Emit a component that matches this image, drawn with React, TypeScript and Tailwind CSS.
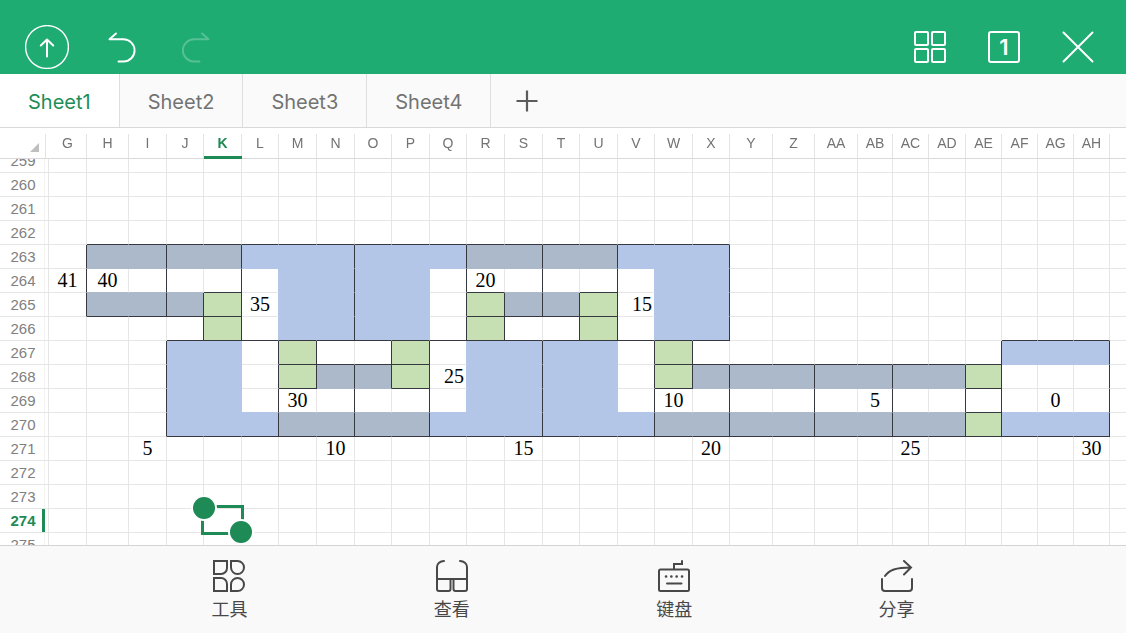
import { useLayoutEffect, useRef, useState } from 'react';
import clsx from 'clsx';

const COLUMNS = [
  { name: 'G', width: 'w-[38px]' },
  { name: 'H', width: 'w-[42px]' },
  { name: 'I', width: 'w-[38px]' },
  { name: 'J', width: 'w-[37px]' },
  { name: 'K', width: 'w-[38px]' },
  { name: 'L', width: 'w-[37px]' },
  { name: 'M', width: 'w-[38px]' },
  { name: 'N', width: 'w-[38px]' },
  { name: 'O', width: 'w-[37px]' },
  { name: 'P', width: 'w-[38px]' },
  { name: 'Q', width: 'w-[37px]' },
  { name: 'R', width: 'w-[38px]' },
  { name: 'S', width: 'w-[38px]' },
  { name: 'T', width: 'w-[37px]' },
  { name: 'U', width: 'w-[38px]' },
  { name: 'V', width: 'w-[37px]' },
  { name: 'W', width: 'w-[38px]' },
  { name: 'X', width: 'w-[37px]' },
  { name: 'Y', width: 'w-[43px]' },
  { name: 'Z', width: 'w-[42px]' },
  { name: 'AA', width: 'w-[43px]' },
  { name: 'AB', width: 'w-[35px]' },
  { name: 'AC', width: 'w-[36px]' },
  { name: 'AD', width: 'w-[37px]' },
  { name: 'AE', width: 'w-[36px]' },
  { name: 'AF', width: 'w-[36px]' },
  { name: 'AG', width: 'w-[36px]' },
  { name: 'AH', width: 'w-[36px]' },
];

const FIRST_ROW = 259;
const ROWS = Array.from({ length: 17 }, (_, i) => FIRST_ROW + i);
const SCROLL_OFFSET = 10;

type Fill = 'slate' | 'blue' | 'green';
type Line = Fill | 'grid' | 'dark';

const FILLS: Record<Fill, string[]> = {
  slate: ['H263:K263', 'H265:J265', 'R263:U263', 'S265:T265', 'N268:O268', 'M270:P270', 'X268:AD268', 'W270:AD270'],
  blue: [
    'L263:Q263', 'M264:P266', 'V263:X263', 'W264:X266', 'J267:K269', 'J270:L270',
    'R267:U269', 'Q270:V270', 'AF267:AH267', 'AF270:AH270',
  ],
  green: ['K265:K266', 'R265:R266', 'U265:U266', 'M267:M268', 'P267:P268', 'W267:W268', 'AE268:AE268', 'AE270:AE270'],
};

// ranges that carry a dark outline
const OUTLINES = [
  'H263:I265', 'J263:K265', 'K265:K265', 'K266:K266', 'L263:N266', 'O263:Q266',
  'R263:S265', 'T263:U265', 'R265:R265', 'R266:R266', 'U265:U265', 'U266:U266', 'S266:T266', 'V263:X266',
  'J267:L270', 'M267:M267', 'M268:M268', 'P267:P267', 'P268:P268', 'M268:N270', 'O268:P270',
  'Q267:S270', 'T267:V270', 'W267:W267', 'W268:W268', 'W268:X270', 'Y268:Z270', 'AA268:AB270', 'AC268:AD270',
  'AE268:AE268', 'AE269:AE269', 'AE270:AE270', 'AF267:AH270',
].map(parseRange);

const VALUES: Record<string, string> = {
  G264: '41', H264: '40', R264: '20', L265: '35', V265: '15', Q268: '25', M269: '30', W269: '10', AB269: '5', AG269: '0',
  I271: '5', N271: '10', S271: '15', X271: '20', AC271: '25', AH271: '30',
};
const RIGHT_ALIGNED = ['V265', 'Q268'];

const BG: Record<Fill, string> = {
  slate: 'bg-[#acb9cb]',
  blue: 'bg-[#b4c6e7]',
  green: 'bg-[#c6e0b3]',
};
const BORDER_RIGHT: Record<Line, string> = {
  grid: 'border-r-[#e6e6e6]',
  dark: 'border-r-[#35383f]',
  slate: 'border-r-[#acb9cb]',
  blue: 'border-r-[#b4c6e7]',
  green: 'border-r-[#c6e0b3]',
};
const BORDER_BOTTOM: Record<Line, string> = {
  grid: 'border-b-[#e6e6e6]',
  dark: 'border-b-[#35383f]',
  slate: 'border-b-[#acb9cb]',
  blue: 'border-b-[#b4c6e7]',
  green: 'border-b-[#c6e0b3]',
};

function parseRange(range: string) {
  const [from, to] = range.split(':').map((ref) => {
    const [, letters, digits] = ref.match(/([A-Z]+)(\d+)/)!;
    return { col: COLUMNS.findIndex((c) => c.name === letters), row: Number(digits) };
  });
  return { left: from.col, top: from.row, right: to.col, bottom: to.row };
}

const FILL_RANGES = (Object.keys(FILLS) as Fill[]).flatMap((fill) =>
  FILLS[fill].map((range) => ({ fill, ...parseRange(range) }))
);

function fillAt(col: number, row: number): Fill | undefined {
  return FILL_RANGES.find((r) => col >= r.left && col <= r.right && row >= r.top && row <= r.bottom)?.fill;
}

function rightLine(col: number, row: number): Line {
  const dark = OUTLINES.some((r) => row >= r.top && row <= r.bottom && (r.right === col || r.left === col + 1));
  return dark ? 'dark' : fillAt(col, row) ?? fillAt(col + 1, row) ?? 'grid';
}

function bottomLine(col: number, row: number): Line {
  const dark = OUTLINES.some((r) => col >= r.left && col <= r.right && (r.bottom === row || r.top === row + 1));
  return dark ? 'dark' : fillAt(col, row) ?? fillAt(col, row + 1) ?? 'grid';
}

function TopBar() {
  const button = 'flex size-11 items-center justify-center';
  return (
    <header className="flex shrink-0 items-end justify-between bg-[#1eac73] pt-[25px] pr-[26px] pb-[5px] pl-[25px] text-white">
      <div className="flex gap-[30px]">
        <button type="button" aria-label="Upload" className={button}>
          <svg className="size-11" viewBox="0 0 44 44" fill="none" stroke="currentColor" strokeLinecap="round" strokeLinejoin="round">
            <circle cx="22" cy="22" r="21.4" strokeWidth="1.4" />
            <path d="M22 31.5V15M15.8 20.5L22 14.5L28.2 20.5" strokeWidth="2" />
          </svg>
        </button>
        <button type="button" aria-label="Undo" className={button}>
          <svg className="size-11" viewBox="0 0 44 44" fill="none" stroke="currentColor" strokeWidth="1.9" strokeLinecap="round" strokeLinejoin="round">
            <path d="M17 8.5L10.5 14.3H24.5A11.1 11.1 0 0 1 24.5 36.5H19.5" />
          </svg>
        </button>
        <button type="button" aria-label="Redo" className={clsx(button, 'opacity-25')} disabled>
          <svg className="size-11" viewBox="0 0 44 44" fill="none" stroke="currentColor" strokeWidth="1.9" strokeLinecap="round" strokeLinejoin="round">
            <path d="M29 8.5L35.5 14.3H21A11.1 11.1 0 0 0 21 36.5H26.5" />
          </svg>
        </button>
      </div>
      <div className="flex gap-[30px]">
        <button type="button" aria-label="Grid" className={button}>
          <svg className="size-8" viewBox="0 0 32 32" fill="none" stroke="currentColor" strokeWidth="2">
            <rect x="1" y="1" width="13" height="13" rx="1" />
            <rect x="18" y="1" width="13" height="13" rx="1" />
            <rect x="1" y="18" width="13" height="13" rx="1" />
            <rect x="18" y="18" width="13" height="13" rx="1" />
          </svg>
        </button>
        <button type="button" aria-label="Open documents" className={button}>
          <span className="flex size-8 items-center justify-center rounded-[3px] border-2 border-white font-['Inter','Roboto',sans-serif] text-[22px] leading-none font-semibold">
            1
          </span>
        </button>
        <button type="button" aria-label="Close" className={button}>
          <svg className="size-8" viewBox="0 0 32 32" fill="none" stroke="currentColor" strokeWidth="2" strokeLinecap="round">
            <path d="M1.5 1.5L30.5 30.5M30.5 1.5L1.5 30.5" />
          </svg>
        </button>
      </div>
    </header>
  );
}

function SheetTabs() {
  const [active, setActive] = useState('Sheet1');
  return (
    <nav className="flex h-[54px] shrink-0 border-b border-[#d9d9d9] bg-[#fafafa] font-['Inter','Roboto',sans-serif] text-xl">
      {['Sheet1', 'Sheet2', 'Sheet3', 'Sheet4'].map((sheet) => (
        <button
          key={sheet}
          type="button"
          onClick={() => setActive(sheet)}
          className={clsx(
            'border-r border-[#dedede] px-7 pt-0.5',
            sheet === active ? 'bg-white text-[#1e8e57]' : 'text-[#737373]'
          )}
        >
          {sheet}
        </button>
      ))}
      <button type="button" aria-label="Add sheet" className="flex w-[71px] items-center justify-center text-[#5c5c5c]">
        <svg className="size-[22px]" viewBox="0 0 22 22" stroke="currentColor" strokeWidth="2.2">
          <path d="M11 0.5V21.5M0.5 11H21.5" />
        </svg>
      </button>
    </nav>
  );
}

function Selection() {
  return (
    <span className="pointer-events-none absolute -inset-[3px] -top-1 z-10 border-3 border-[#1e8a55]">
      <span className="absolute -top-[11px] -left-[11px] size-[22px] rounded-full bg-[#1e8a55] ring-2 ring-white" />
      <span className="absolute -right-[11px] -bottom-[11px] size-[22px] rounded-full bg-[#1e8a55] ring-2 ring-white" />
    </span>
  );
}

function Grid() {
  const scrollRef = useRef<HTMLDivElement>(null);

  useLayoutEffect(() => {
    if (scrollRef.current) scrollRef.current.scrollTop = SCROLL_OFFSET;
  }, []);

  return (
    <main ref={scrollRef} className="min-h-0 flex-1 overflow-hidden bg-white">
      <table className="w-full table-fixed border-separate border-spacing-0 text-center">
        <colgroup>
          <col className="w-[49px]" />
          {COLUMNS.map((col) => (
            <col key={col.name} className={col.width} />
          ))}
          <col />
        </colgroup>
        <thead className="sticky top-0 z-20 bg-white font-['Liberation_Sans',sans-serif] text-sm leading-[18px] text-[#737373]">
          <tr className="h-[31px]">
            <th className="border-b border-[#dadada] p-0 align-bottom">
              <div className="mr-[3px] flex h-6 items-end justify-end border-r border-[#e3e3e3] pr-1.5 pb-1.5">
                <svg className="size-[9px] text-[#bfbfbf]" viewBox="0 0 9 9" fill="currentColor">
                  <path d="M9 0V9H0Z" />
                </svg>
              </div>
            </th>
            {COLUMNS.map((col) => (
              <th
                key={col.name}
                scope="col"
                className={clsx(
                  'p-0 align-bottom',
                  col.name === 'K' ? 'border-b-3 border-[#1e8a55] font-bold text-[#1e8a55]' : 'border-b border-[#dadada] font-normal'
                )}
              >
                <div className={clsx('border-r border-[#e3e3e3]', col.name === 'K' ? 'h-[22px]' : 'h-6')}>{col.name}</div>
              </th>
            ))}
            <td className="border-b border-[#dadada]" />
          </tr>
        </thead>
        <tbody className="font-['Liberation_Serif',serif] text-xl leading-[23px] text-black">
          {ROWS.map((row) => (
            <tr key={row} className="h-6">
              <th
                scope="row"
                className={clsx(
                  "border-r border-b border-[#e6e6e6] p-0 font-['Liberation_Sans',sans-serif] text-[15px]",
                  row === 274 ? 'font-bold text-[#1e8a55]' : 'font-normal text-[#808080]'
                )}
              >
                <div
                  className={clsx(
                    'mr-[3px]',
                    row === 274 ? 'border-r-3 border-[#1e8a55] pl-1' : 'border-r border-[#f2f2f2] pl-0.5'
                  )}
                >
                  {row}
                </div>
              </th>
              {COLUMNS.map((col, c) => {
                const ref = `${col.name}${row}`;
                const fill = fillAt(c, row);
                return (
                  <td
                    key={ref}
                    className={clsx(
                      'border-r border-b p-0',
                      fill && BG[fill],
                      BORDER_RIGHT[rightLine(c, row)],
                      BORDER_BOTTOM[bottomLine(c, row)],
                      RIGHT_ALIGNED.includes(ref) && 'pr-0.5 text-right',
                      ref === 'K274' && 'relative'
                    )}
                  >
                    {VALUES[ref]}
                    {ref === 'K274' && <Selection />}
                  </td>
                );
              })}
              <td className="border-b border-[#e6e6e6]" />
            </tr>
          ))}
        </tbody>
      </table>
    </main>
  );
}

const TOOLS = [
  {
    label: '工具',
    icon: (
      <>
        <path d="M1 1H14V8A6 6 0 0 1 8 14H1Z" />
        <path d="M24.5 1A6.5 6.5 0 1 1 24.5 14A6.5 6.5 0 0 1 18 7.5V1Z" />
        <path d="M1 18H8A6 6 0 0 1 14 24V31H1Z" />
        <path d="M18 31V24.5A6.5 6.5 0 1 1 24.5 31Z" />
      </>
    ),
  },
  {
    label: '查看',
    icon: (
      <>
        <path d="M8 1A7 6 0 0 0 1 7V29A2 2 0 0 0 3 31H12.5A2 2 0 0 0 14.5 29V19H17.5V29A2 2 0 0 0 19.5 31H29A2 2 0 0 0 31 29V7A7 6 0 0 0 24 1" />
        <path d="M1 19H31" />
      </>
    ),
  },
  {
    label: '键盘',
    icon: (
      <>
        <rect x="1" y="9.5" width="30" height="21.5" rx="1.5" />
        <path d="M16 9V4H24V1M9 23.5H23.5" />
        <path d="M8 16.5H8.1M13.3 16.5H13.4M18.6 16.5H18.7M24 16.5H24.1" strokeWidth="2.6" />
      </>
    ),
  },
  {
    label: '分享',
    icon: (
      <>
        <path d="M1 19V28A3 3 0 0 0 4 31H28A3 3 0 0 0 31 28V19" />
        <path d="M4 16C8 10 15 7.5 30 7.5M23 1L30 7.5L23 14.5" />
      </>
    ),
  },
];

function BottomBar() {
  return (
    <footer className="grid h-[88px] shrink-0 grid-cols-4 border-t border-[#d4d4d4] bg-[#f9f9f9] px-[10.5%] text-[#484848]">
      {TOOLS.map((tool) => (
        <button
          key={tool.label}
          type="button"
          className="flex flex-col items-center gap-0.5 pt-3.5 font-['Noto_Sans_CJK_SC',sans-serif] text-lg leading-7"
        >
          <svg className="size-8" viewBox="0 0 32 32" fill="none" stroke="currentColor" strokeWidth="2" strokeLinecap="round">
            {tool.icon}
          </svg>
          {tool.label}
        </button>
      ))}
    </footer>
  );
}

export default function App() {
  return (
    <div className="flex h-screen flex-col overflow-hidden">
      <TopBar />
      <SheetTabs />
      <Grid />
      <BottomBar />
    </div>
  );
}
